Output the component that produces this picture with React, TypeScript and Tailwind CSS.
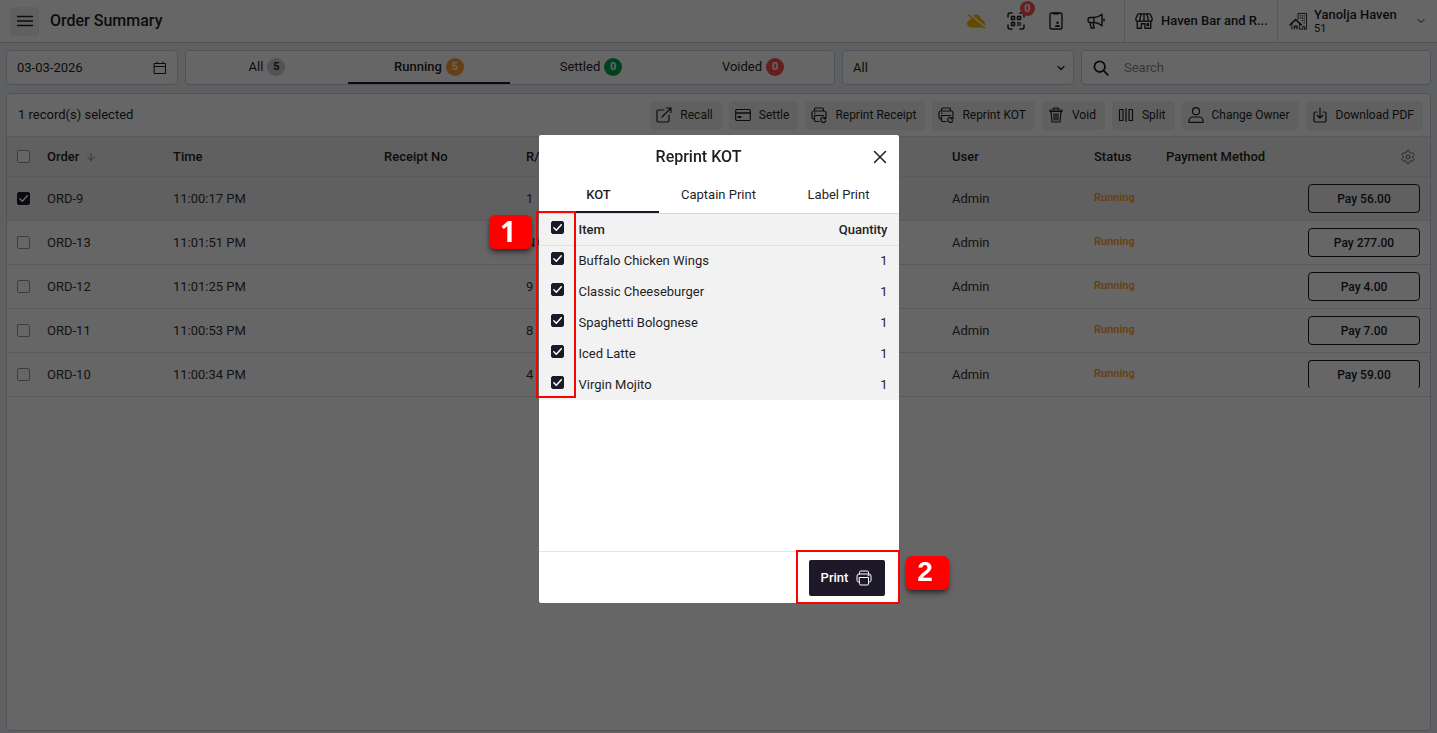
import React from "react";
import { ArrowDown, ChevronDown, Settings } from "lucide-react";

type IconProps = { className?: string };

const line = {
  fill: "none",
  stroke: "currentColor",
  strokeLinecap: "round" as const,
  strokeLinejoin: "round" as const,
};

function CloudOff({ className }: IconProps) {
  return (
    <svg viewBox="0 0 20 16" className={className}>
      <path d="M5 14.500C2.600 14.500 1 12.900 1 10.600c0-2.100 1.500-3.700 3.500-3.900C5 3.500 7.200 1.500 9.800 1.500c2.900 0 5 2 5.500 4.900 2.200.1 3.700 1.800 3.700 4s-1.500 4.100-3.800 4.100z" fill="#f5b800" />
      <path d="M3 0.500l16 13.500" stroke="#fff" strokeWidth="1.800" />
      <path d="M2 1.500l16.500 13.500" stroke="#f5b800" strokeWidth="1.400" strokeLinecap="round" />
    </svg>
  );
}

function QrIcon({ className }: IconProps) {
  return (
    <svg viewBox="0 0 18 18" className={className} {...line} strokeWidth="1.500">
      <path d="M1 5V3a2 2 0 0 1 2-2h2M13 1h2a2 2 0 0 1 2 2v2M17 13v2a2 2 0 0 1-2 2h-2M5 17H3a2 2 0 0 1-2-2v-2" />
      <path d="M4.500 4.500h3v3h-3zM10.500 4.500h3v3h-3zM4.500 10.500h3v3h-3z" />
      <path d="M10 10h4v4h-4z" fill="currentColor" stroke="none" opacity="0.55" />
      <path d="M10.500 10.500h1M13.500 12h.2M10.500 13.500h.5" strokeWidth="1" />
    </svg>
  );
}

function KioskIcon({ className }: IconProps) {
  return (
    <svg viewBox="0 0 14 18" className={className} {...line} strokeWidth="1.400">
      <rect x="1" y="1" width="12" height="16" rx="1.500" />
      <path d="M4.500 1.500h5" strokeWidth="2" />
      <circle cx="8.500" cy="10.800" r="1.300" fill="currentColor" stroke="none" />
      <path d="M6 15v-.6a1.500 1.500 0 0 1 1.500-1.500h2a1.500 1.500 0 0 1 1.500 1.500v.6z" fill="currentColor" stroke="none" />
    </svg>
  );
}

function Megaphone({ className }: IconProps) {
  return (
    <svg viewBox="0 0 18 18" className={className} {...line} strokeWidth="1.400">
      <path d="M7 5.500H3.200A2.200 2.200 0 0 0 1 7.700v.6a2.200 2.200 0 0 0 2.200 2.200H7c3 0 5.500 1.200 8 3.300V2.200C12.500 4.300 10 5.500 7 5.500zM7 5.500v5M3 10.500l1.200 5.500h3L6 10.500M17 7v2" />
    </svg>
  );
}

function StoreIcon({ className }: IconProps) {
  return (
    <svg viewBox="0 0 20 18" className={className} {...line} strokeWidth="1.500">
      <path d="M3.500 1h13L19 6v1.200a2.200 2.200 0 0 1-4.500 0 2.200 2.200 0 0 1-4.500 0 2.200 2.200 0 0 1-4.500 0A2.200 2.200 0 0 1 1 7.200V6zM7 1L5.500 5.500v1.700M13 1l1.500 4.500v1.700M10 1v6" />
      <path d="M2.500 9.500V17H7v-5h4v5h6.500V9.500M13.500 12h1.500v2h-1.500z" />
    </svg>
  );
}

function HotelIcon({ className }: IconProps) {
  return (
    <svg viewBox="0 0 20 20" className={className} {...line} strokeWidth="1">
      <path d="M1 13.500L7 8l6 5.500" strokeWidth="1.600" />
      <path d="M3 12.500V18M11 12.500V18H14M9.500 7.500V1.500H18.500V18H16.500M5.500 18v-3.500h3V18M5.500 16h3M14.500 18v-3h2v3" />
      <path d="M12 4h.1M14 4h.1M16 4h.1M12 6.500h.1M14 6.500h.1M16 6.500h.1M14 9h.1M16 9h.1M16 11.500h.1" strokeWidth="1.400" />
    </svg>
  );
}

function CalendarIcon({ className }: IconProps) {
  return (
    <svg viewBox="0 0 14 14" className={className} {...line} strokeWidth="1">
      <path d="M1.500 2.500h11v10h-11zM1.500 5.500h11M4 1v1.500M10 1v1.500" />
    </svg>
  );
}

function SearchIcon({ className }: IconProps) {
  return (
    <svg viewBox="0 0 16 16" className={className} {...line} strokeWidth="1.800">
      <circle cx="6.700" cy="6.700" r="5.300" />
      <path d="M10.600 10.600l4.200 4.200" />
    </svg>
  );
}

function RecallIcon({ className }: IconProps) {
  return (
    <svg viewBox="0 0 16 16" className={className} {...line} strokeWidth="1.200">
      <path d="M8 3H2.500A1.500 1.500 0 0 0 1 4.500v9A1.500 1.500 0 0 0 2.500 15h9a1.500 1.500 0 0 0 1.500-1.500V8M6 10l9-9M10.500 1H15v4.500" />
    </svg>
  );
}

function CardIcon({ className }: IconProps) {
  return (
    <svg viewBox="0 0 16 16" className={className} {...line} strokeWidth="1.200">
      <rect x="0.700" y="2.500" width="14.600" height="11" rx="1.200" />
      <path d="M1 6h14" strokeWidth="1.600" />
      <path d="M3.500 10h2" strokeWidth="2" />
    </svg>
  );
}

function ReprintIcon({ className }: IconProps) {
  return (
    <svg viewBox="0 0 16 16" className={className} {...line} strokeWidth="1.200">
      <path d="M3.500 4V2.300C3.500 1.500 4 1 4.800 1h6.400c.8 0 1.300.5 1.300 1.300V4M3.500 12H2.800A1.800 1.800 0 0 1 1 10.200V6a2 2 0 0 1 2-2h10a2 2 0 0 1 2 2v3M8 14.500H4.500a1 1 0 0 1-1-1V8.500h9M3.500 6.200h.5" />
      <path d="M14.600 11.500a2.600 2.600 0 1 0 .2 2.300M14.900 9.800v2h-2" />
    </svg>
  );
}

function TrashIcon({ className }: IconProps) {
  return (
    <svg viewBox="0 0 16 16" className={className} {...line} strokeWidth="1.200">
      <path d="M2 3h12v1.500H2zM5.500 3V1h5v2M3 4.500L4 15h8l1-10.500M6 6.500l.2 6.500M8 6.500V13M10 6.500L9.800 13" />
    </svg>
  );
}

function SplitIcon({ className }: IconProps) {
  return (
    <svg viewBox="0 0 16 16" className={className} {...line} strokeWidth="1.200">
      <path d="M1.500 2.500h3.500v11H1.500zM11 2.500h3.500v11H11zM8 1.500v13" />
    </svg>
  );
}

function OwnerIcon({ className }: IconProps) {
  return (
    <svg viewBox="0 0 16 16" className={className} {...line} strokeWidth="1.200">
      <circle cx="8" cy="4.200" r="3.500" />
      <path d="M1 15.300v-1.500C1 11.500 3 10 5 10h6c2 0 4 1.500 4 3.800v1.500z" />
    </svg>
  );
}

function DownloadIcon({ className }: IconProps) {
  return (
    <svg viewBox="0 0 16 16" className={className} {...line} strokeWidth="1.200">
      <path d="M5 5H3.500A1.500 1.500 0 0 0 2 6.500v7A1.500 1.500 0 0 0 3.500 15h9a1.500 1.500 0 0 0 1.500-1.500v-7A1.500 1.500 0 0 0 12.500 5H11M8 1v10M5 8.200L8 11l3-2.800" />
    </svg>
  );
}

function PrinterIcon({ className }: IconProps) {
  return (
    <svg viewBox="0 0 16 16" className={className} {...line} strokeWidth="1">
      <path d="M3.500 4V2.200C3.500 1.500 4 1 4.700 1h6.600c.7 0 1.200.5 1.200 1.200V4M3.500 12H2.500C1.500 12 1 11.300 1 10.500V6a2 2 0 0 1 2-2h10a2 2 0 0 1 2 2v4.500c0 .8-.5 1.500-1.500 1.500h-1M3.500 7.500h9V14a1 1 0 0 1-1 1h-7a1 1 0 0 1-1-1zM12 5.700h1" />
    </svg>
  );
}

function Checkbox({ label, checked = false }: { label: string; checked?: boolean }) {
  return (
    <span className="relative block size-[13px]">
      <input
        type="checkbox"
        aria-label={label}
        defaultChecked={checked}
        className="peer block size-[13px] appearance-none rounded-xs border border-[#999] bg-white checked:border-[#1d1929] checked:bg-[#1d1929]"
      />
      <svg viewBox="0 0 13 13" className="pointer-events-none absolute inset-0 hidden size-[13px] peer-checked:block" {...line} stroke="#fff" strokeWidth="1.500">
        <path d="M2.800 6.800l2.500 2.500 5-5.600" />
      </svg>
    </span>
  );
}

const tabs = [
  { name: "All", count: 5, badge: "bg-[#cfcfcf] text-[#222]" },
  { name: "Running", count: 5, badge: "bg-[#ff9f2e] text-white", active: true },
  { name: "Settled", count: 0, badge: "bg-[#00a651] text-white" },
  { name: "Voided", count: 0, badge: "bg-[#ff4d4f] text-white" },
];

const actions = [
  { name: "Recall", Icon: RecallIcon },
  { name: "Settle", Icon: CardIcon },
  { name: "Reprint Receipt", Icon: ReprintIcon },
  { name: "Reprint KOT", Icon: ReprintIcon },
  { name: "Void", Icon: TrashIcon },
  { name: "Split", Icon: SplitIcon },
  { name: "Change Owner", Icon: OwnerIcon },
  { name: "Download PDF", Icon: DownloadIcon },
];

const orders = [
  { id: "ORD-9", time: "11:00:17 PM", room: "1", pay: "56.00", selected: true },
  { id: "ORD-13", time: "11:01:51 PM", room: "NA", pay: "277.00" },
  { id: "ORD-12", time: "11:01:25 PM", room: "9", pay: "4.00" },
  { id: "ORD-11", time: "11:00:53 PM", room: "8", pay: "7.00" },
  { id: "ORD-10", time: "11:00:34 PM", room: "4", pay: "59.00" },
];

const items = ["Buffalo Chicken Wings", "Classic Cheeseburger", "Spaghetti Bolognese", "Iced Latte", "Virgin Mojito"];

function Header() {
  return (
    <header className="flex h-[43px] shrink-0 items-center border-b border-[#c9ccd1] bg-white">
      <button aria-label="Menu" className="ml-[10px] flex size-[29px] items-center justify-center rounded-sm bg-[#f0f0f0]">
        <svg viewBox="0 0 16 12" className="h-3 w-4" stroke="currentColor" strokeWidth="1.500">
          <path d="M0 1.500h16M0 6h16M0 10.500h16" />
        </svg>
      </button>
      <h1 className="ml-[11px] text-base font-medium">Order Summary</h1>
      <div className="ml-auto flex h-full items-center">
        <div className="mr-[18px] flex items-center gap-5 *:flex *:w-5 *:justify-center">
          <button aria-label="Offline"><CloudOff className="h-4 w-5" /></button>
          <button aria-label="QR orders" className="relative">
            <QrIcon className="size-[18px]" />
            <span className="absolute -top-[11px] left-[14px] flex size-[15px] items-center justify-center rounded-full bg-[#ff4d4f] text-[11px] leading-none font-bold text-white">0</span>
          </button>
          <button aria-label="Kiosk"><KioskIcon className="h-[18px] w-[14px]" /></button>
          <button aria-label="Announcements"><Megaphone className="size-[18px]" /></button>
        </div>
        <button className="flex h-full w-[153px] items-center gap-2 border-l border-[#d9d9d9] pl-[10px] font-medium whitespace-nowrap">
          <StoreIcon className="h-[18px] w-[18px]" />
          Haven Bar and R...
        </button>
        <button className="flex h-full w-40 items-center border-l border-[#d9d9d9] pr-[10px] pl-[11px] text-left">
          <HotelIcon className="size-[19px]" />
          <span className="ml-[6px]">
            <span className="block leading-[15px] font-medium">Yanolja Haven</span>
            <span className="block text-[11px] leading-[13px]">51</span>
          </span>
          <ChevronDown className="ml-auto size-3" strokeWidth={2} />
        </button>
      </div>
    </header>
  );
}

function Filters() {
  return (
    <div className="flex h-[35px] shrink-0 gap-[7px]">
      <label className="flex w-[172px] items-center justify-between rounded-sm border border-[#c9d0da] bg-white px-[10px]">
        <input aria-label="Date" defaultValue="03-03-2026" className="w-24 outline-none" />
        <CalendarIcon className="size-[14px]" />
      </label>
      <nav className="grid w-[650px] grid-cols-4 rounded-sm border border-[#c9d0da] bg-white">
        {tabs.map((t) => (
          <button
            key={t.name}
            className={`flex items-center justify-center gap-1 border-b-2 ${t.active ? "border-[#1d1929] font-medium" : "border-transparent"}`}
          >
            {t.name}
            <span className={`flex size-[18px] items-center justify-center rounded-full text-[11px] leading-none font-bold ${t.badge}`}>{t.count}</span>
          </button>
        ))}
      </nav>
      <div className="relative w-[232px]">
        <select aria-label="Order type" className="h-full w-full appearance-none rounded-sm border border-[#c9d0da] bg-white px-[10px]">
          <option>All</option>
        </select>
        <ChevronDown className="pointer-events-none absolute top-3 right-[7px] size-3" strokeWidth={2.5} />
      </div>
      <label className="flex flex-1 items-center gap-[15px] rounded-sm border border-[#c9d0da] bg-white px-[11px]">
        <SearchIcon className="size-4" />
        <input aria-label="Search" placeholder="Search" className="min-w-0 flex-1 outline-none placeholder:text-[#8c8c8c]" />
      </label>
    </div>
  );
}

function Orders() {
  return (
    <section className="flex-1 overflow-hidden rounded-sm border border-[#c9d0da] bg-white">
      <div className="flex h-[42px] items-center justify-between pr-[7px] pl-[11px]">
        <p>1 record(s) selected</p>
        <div className="flex gap-[7px]">
          {actions.map(({ name, Icon }) => (
            <button key={name} className="flex h-[29px] items-center gap-2 rounded-sm bg-[#f0f0f0] pr-[9px] pl-[6px] text-xs">
              <Icon className="size-4" />
              {name}
            </button>
          ))}
        </div>
      </div>
      <table className="w-full table-fixed text-left">
        <colgroup>
          <col className="w-[30px]" />
          <col className="w-[126px]" />
          <col className="w-[211px]" />
          <col className="w-[142px]" />
          <col />
          <col className="w-[142px]" />
          <col className="w-[72px]" />
          <col className="w-[142px]" />
          <col className="w-[132px]" />
        </colgroup>
        <thead>
          <tr className="h-10 border-y border-[#e0e0e0] bg-[#f0f0f0] *:px-[10px] *:font-medium">
            <th><Checkbox label="Select all orders" /></th>
            <th><span className="flex items-center gap-[6px]">Order <ArrowDown className="size-3 text-[#888]" /></span></th>
            <th>Time</th>
            <th>Receipt No</th>
            <th>R/T No</th>
            <th>User</th>
            <th>Status</th>
            <th>Payment Method</th>
            <th><button aria-label="Table settings" className="ml-auto block w-6"><Settings className="mx-auto size-4 text-[#666]" strokeWidth={1.5} /></button></th>
          </tr>
        </thead>
        <tbody>
          {orders.map((o) => (
            <tr key={o.id} className={`group h-11 border-b border-[#e0e0e0] text-[#333] *:px-[10px] ${o.selected ? "bg-[#f0f0f0]" : ""}`}>
              <td><Checkbox label={`Select ${o.id}`} checked={o.selected} /></td>
              <td>{o.id}</td>
              <td>{o.time}</td>
              <td />
              <td>{o.room}</td>
              <td>Admin</td>
              <td className="text-[11px] font-semibold text-[#ff9f2e]">Running</td>
              <td />
              <td>
                <button className="block h-[29px] w-full rounded-sm border border-[#1d1929] text-xs font-medium text-[#1d1929] group-last:border-b-transparent">Pay {o.pay}</button>
              </td>
            </tr>
          ))}
        </tbody>
      </table>
    </section>
  );
}

function ReprintDialog() {
  return (
    <div role="dialog" aria-label="Reprint KOT" className="relative flex h-[468px] w-[360px] flex-col rounded-xs bg-white">
      <div className="relative flex h-11 items-center justify-center pr-10">
        <h2 className="text-base font-medium">Reprint KOT</h2>
        <button aria-label="Close" className="absolute top-[15px] right-3">
          <svg viewBox="0 0 14 14" className="size-[14px]" {...line} strokeWidth="1.500">
            <path d="M1.500 1.500l11 11M12.500 1.500l-11 11" />
          </svg>
        </button>
      </div>
      <div className="grid h-[35px] grid-cols-3 border-b border-[#d9d9d9] *:border-b-2">
        <button className="border-[#1d1929] font-medium">KOT</button>
        <button className="border-transparent">Captain Print</button>
        <button className="border-transparent">Label Print</button>
      </div>
      <table className="w-full bg-[#f2f2f2] text-left">
        <thead>
          <tr className="h-[31px] border-b border-[#e2e2e2]">
            <th className="w-[37px] pb-1 pl-3"><Checkbox label="Select all items" checked /></th>
            <th className="pl-[3px] font-medium">Item</th>
            <th className="pr-[11px] text-right font-medium">Quantity</th>
          </tr>
        </thead>
        <tbody>
          {items.map((name) => (
            <tr key={name} className="h-[31px]">
              <td className="pb-1 pl-3"><Checkbox label={name} checked /></td>
              <td className="pl-[3px]">{name}</td>
              <td className="pr-[11px] text-right">1</td>
            </tr>
          ))}
        </tbody>
      </table>
      <div className="mt-auto flex h-[52px] items-start justify-end border-t border-[#e5e5e5] pt-2 pr-[14px]">
        <button className="flex h-9 w-[76px] items-center justify-center gap-2 rounded-xs bg-[#1d1929] font-medium text-white">
          Print
          <PrinterIcon className="size-4" />
        </button>
      </div>
      <div className="pointer-events-none absolute top-[76px] -left-[3px] h-[187px] w-10 border-2 border-[#fe0000]" />
      <div className="pointer-events-none absolute -right-px -bottom-px h-[54px] w-[104px] border-2 border-[#fe0000]" />
      <div className="absolute top-20 -left-[50px] flex h-[34px] w-[43px] items-center justify-center rounded-md bg-[#fe0000] pr-1 pb-[2px] font-['Open_Sans',sans-serif] text-[28px] leading-none font-bold text-white shadow-md shadow-black/50">1</div>
      <div className="absolute -right-[50px] bottom-[13px] flex h-[34px] w-[43px] items-center justify-center rounded-md bg-[#fe0000] pr-1 pb-[2px] font-['Liberation_Sans',sans-serif] text-[28px] leading-none font-bold text-white shadow-md shadow-black/50">2</div>
    </div>
  );
}

export default function App() {
  return (
    <div className="flex min-h-screen flex-col bg-[#eef1f6] font-[Roboto,sans-serif] text-[13px] text-[#1f1f1f]">
      <Header />
      <main className="flex flex-1 flex-col gap-2 px-[6px] pt-[7px] pb-[2px]">
        <Filters />
        <Orders />
      </main>
      <div className="fixed inset-0 flex items-center justify-center bg-black/60 pt-[5px]">
        <ReprintDialog />
      </div>
    </div>
  );
}
